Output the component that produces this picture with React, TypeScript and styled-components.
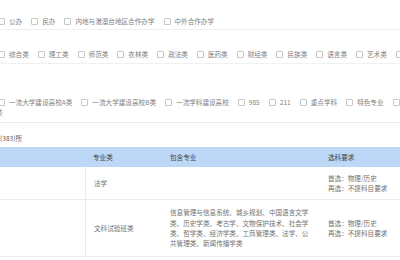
import React from 'react';
import styled, { createGlobalStyle } from 'styled-components';

const GlobalStyle = createGlobalStyle`
  html, body {
    margin: 0;
    padding: 0;
    background: #ffffff;
    overflow: hidden;
  }
  body {
    font-family: 'Noto Sans CJK SC', 'Noto Sans', sans-serif;
    font-size: 6.6px;
    color: #777;
  }
`;

const Page = styled.div`
  width: 400px;
  height: 260px;
  overflow: hidden;
  display: flex;
  flex-direction: column;
`;

const FilterRow = styled.div<{ $top: number; $bottom?: number; $line?: boolean }>`
  display: flex;
  align-items: center;
  margin-left: -2px;
  padding-top: ${p => p.$top}px;
  padding-bottom: ${p => p.$bottom ?? 0}px;
  height: 10px;
  line-height: 10px;
  border-bottom: ${p => (p.$line ? '1px solid #f0f0f0' : 'none')};
  white-space: nowrap;
`;

const Option = styled.label`
  display: flex;
  align-items: center;
  margin-right: 9px;
  color: #808080;
`;

const Box = styled.span`
  display: inline-block;
  width: 5px;
  height: 5px;
  border: 1px solid #c8c8c8;
  border-radius: 1px;
  background: #fff;
  margin-right: 4px;
  flex: none;
`;

const Fragment = styled.div`
  height: 11px;
  line-height: 11px;
  margin-left: -4px;
  padding-bottom: 4px;
  color: #8a8a8a;
`;

const Table = styled.div`
  border-top: 1px solid #ececec;
  display: flex;
  flex-direction: column;
`;

const Caption = styled.div`
  height: 10px;
  line-height: 10px;
  padding: 10px 0 4px 0;
  color: #555;
`;

const Grid = styled.div`
  display: grid;
  grid-template-columns: 85px 77px 158px 1fr;
`;

const HeadCell = styled.div`
  height: 20px;
  background: #bcd8f6;
  display: flex;
  align-items: center;
  padding-left: 8px;
  color: #444;
`;

const Cell = styled.div<{ $height: number; $divider?: boolean }>`
  height: ${p => p.$height}px;
  display: flex;
  flex-direction: column;
  justify-content: center;
  padding: 0 8px;
  line-height: 10.4px;
  color: #727272;
  border-bottom: 1px solid #ececec;
  border-left: ${p => (p.$divider ? '1px solid #ececec' : 'none')};
`;

const types = ['综合类', '理工类', '师范类', '农林类', '政法类', '医药类', '财经类', '民族类', '语言类', '艺术类'];
const levels = ['一流大学建设高校A类', '一流大学建设高校B类', '一流学科建设高校', '985', '211', '重点学科', '特色专业'];

const rows = [
  {
    height: 32,
    category: '法学',
    majors: '',
    first: '首选：物理/历史',
    second: '再选：不提科目要求',
  },
  {
    height: 56,
    category: '文科试验班类',
    majors:
      '信息管理与信息系统、城乡规划、中国语言文学类、历史学类、考古学、文物保护技术、社会学类、哲学类、经济学类、工商管理类、法学、公共管理类、新闻传播学类',
    first: '首选：物理/历史',
    second: '再选：不提科目要求',
  },
];

const Check: React.FC<{ text: string }> = ({ text }) => (
  <Option>
    <Box />
    {text}
  </Option>
);

export default function App() {
  return (
    <Page>
      <GlobalStyle />
      <FilterRow $top={16} $bottom={3} $line>
        {['公办', '民办', '内地与港澳台地区合作办学', '中外合作办学'].map(t => (
          <Check key={t} text={t} />
        ))}
      </FilterRow>
      <FilterRow $top={19} $bottom={4} $line>
        {types.map(t => (
          <Check key={t} text={t} />
        ))}
        <Box />
      </FilterRow>
      <FilterRow $top={33}>
        {levels.map(t => (
          <Check key={t} text={t} />
        ))}
        <Box />
      </FilterRow>
      <Fragment>类</Fragment>
      <Table>
        <Caption>(383)所</Caption>
        <Grid>
          <HeadCell />
          <HeadCell>专业类</HeadCell>
          <HeadCell>包含专业</HeadCell>
          <HeadCell>选科要求</HeadCell>
          {rows.map(r => (
            <React.Fragment key={r.category}>
              <Cell $height={r.height} />
              <Cell $height={r.height} $divider>{r.category}</Cell>
              <Cell $height={r.height}>{r.majors}</Cell>
              <Cell $height={r.height}>
                <span>{r.first}</span>
                <span>{r.second}</span>
              </Cell>
            </React.Fragment>
          ))}
        </Grid>
      </Table>
    </Page>
  );
}
